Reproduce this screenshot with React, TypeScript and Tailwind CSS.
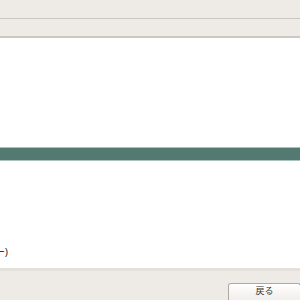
export default function App() {
  return (
    <div
      className="w-[300px] h-[300px] flex flex-col bg-white overflow-hidden"
      style={{ fontFamily: '"Liberation Sans", "Noto Sans CJK JP", sans-serif' }}
    >
      {/* top bars */}
      <div className="h-[19px] bg-[#eeeae6] border-b border-[#cdc7c1]" />
      <div className="h-[19px] bg-[#eeeae6] border-b-2 border-[#cdc7c1]" />

      {/* content */}
      <div className="flex-1 flex flex-col relative">
        <div className="h-[109px]" />
        <div className="h-[14px] bg-[#527a70] border-y border-[#a9c3ba]" />
        <div className="flex-1" />
        <div className="h-[14px] text-[9px] leading-[14px] text-black -ml-[4px] mb-[9px] whitespace-nowrap">ー)</div>
      </div>

      {/* bottom bar */}
      <div className="h-[32px] bg-[#eeeae6] border-t-[3px] border-[#e4e0dc] flex items-end justify-end">
        <button className="w-[73px] h-[17px] mr-[-1px] rounded-t-[3px] border border-b-0 border-[#aea8a2] bg-gradient-to-b from-white to-[#f1eeeb] text-[9px] text-[#333] flex items-center justify-center">
          戻る
        </button>
      </div>
    </div>
  );
}
